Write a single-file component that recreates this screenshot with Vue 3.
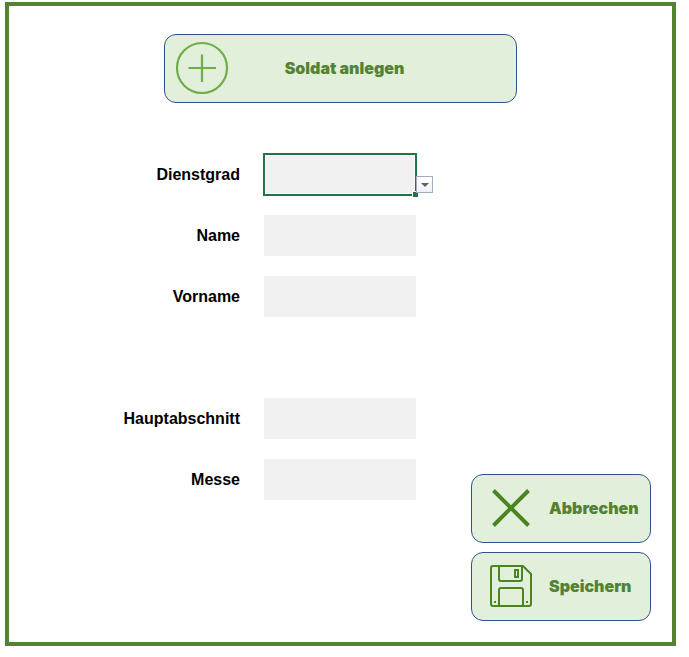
<template>
  <form class="frame" @submit.prevent>
    <button type="button" class="btn btn-create">
      <svg class="icon-plus" viewBox="0 0 54 54" aria-hidden="true">
        <circle cx="27" cy="27" r="25" />
        <path d="M27 13.5V41M13.5 27H41" />
      </svg>
      <span class="create-text">Soldat anlegen</span>
    </button>

    <div class="content">
      <div class="fields">
        <div
          v-for="field in fields"
          :key="field.id"
          class="field-row"
          :class="{ 'new-group': field.newGroup }"
        >
          <label class="field-label" :for="field.id">{{ field.label }}</label>
          <div v-if="field.type === 'select'" class="select-cell">
            <select :id="field.id" v-model="values[field.id]" class="field-control">
              <option value=""></option>
            </select>
            <span class="fill-handle"></span>
            <span class="drop-arrow">
              <svg viewBox="0 0 8 4" aria-hidden="true">
                <path d="M0 0H8L4 4Z" />
              </svg>
            </span>
          </div>
          <input
            v-else
            :id="field.id"
            v-model="values[field.id]"
            type="text"
            class="field-control"
          >
        </div>
      </div>

      <div class="actions">
        <button type="button" class="btn btn-action">
          <svg class="icon-action icon-cancel" viewBox="0 0 42 42" aria-hidden="true">
            <path d="M3.5 3.5L38.5 38.5M38.5 3.5L3.5 38.5" />
          </svg>
          <span>Abbrechen</span>
        </button>
        <button type="submit" class="btn btn-action">
          <svg class="icon-action icon-save" viewBox="0 0 42 42" aria-hidden="true">
            <path d="M3 1H33L41 9V39Q41 41 39 41H3Q1 41 1 39V3Q1 1 3 1Z" />
            <path d="M9 1V14Q9 16 11 16H30Q32 16 32 14V1" />
            <path d="M25 5H28V12H25Z" />
            <path d="M9 41V25Q9 23 11 23H31Q33 23 33 25V41" />
            <path class="dot" d="M4 36H6V38H4ZM36 36H38V38H36Z" />
          </svg>
          <span>Speichern</span>
        </button>
      </div>
    </div>
  </form>
</template>

<script setup>
import { reactive } from 'vue'

const fields = [
  { id: 'dienstgrad', label: 'Dienstgrad', type: 'select' },
  { id: 'name', label: 'Name', type: 'text' },
  { id: 'vorname', label: 'Vorname', type: 'text' },
  { id: 'hauptabschnitt', label: 'Hauptabschnitt', type: 'text', newGroup: true },
  { id: 'messe', label: 'Messe', type: 'text' }
]

const values = reactive({
  dienstgrad: '',
  name: '',
  vorname: '',
  hauptabschnitt: '',
  messe: ''
})
</script>

<style>
body {
  margin: 0;
  background: #ffffff;
}
</style>

<style scoped>
.frame {
  display: flex;
  flex-direction: column;
  box-sizing: border-box;
  min-height: calc(100vh - 13px);
  margin: 2px 13px 11px 5px;
  padding: 28px 21px 21px;
  border: 4px solid #548235;
  font-family: Arial, "Liberation Sans", sans-serif;
}

.btn {
  display: flex;
  align-items: center;
  box-sizing: border-box;
  height: 69px;
  padding: 0 0 1px;
  background: #e2efda;
  border: 1px solid #2f528f;
  border-radius: 12px;
  color: #548235;
  font-family: "Arial Black", Inter, sans-serif;
  font-size: 16px;
  font-weight: 900;
  line-height: 20px;
  cursor: pointer;
}

.btn:hover {
  background: #d5e8c9;
}

.btn-create {
  align-self: center;
  width: 353px;
  max-width: 100%;
  padding-left: 10px;
  padding-right: 10px;
}

.icon-plus {
  flex: none;
  width: 54px;
  height: 54px;
  fill: none;
  stroke: #70ad47;
  stroke-width: 2.2;
}

.create-text {
  flex: 1;
  padding-right: 46px;
  text-align: center;
}

.content {
  display: flex;
  flex: 1;
  justify-content: space-between;
  gap: 20px;
  padding-top: 51px;
}

.fields {
  display: flex;
  flex-direction: column;
  gap: 20px;
}

.field-row {
  display: grid;
  grid-template-columns: 210px 152px;
  align-items: center;
  column-gap: 24px;
}

.new-group {
  margin-top: 61px;
}

.field-label {
  color: #000000;
  font-size: 16px;
  font-weight: bold;
  line-height: 20px;
  text-align: right;
}

.field-control {
  display: block;
  box-sizing: border-box;
  width: 100%;
  height: 41px;
  padding: 0 8px;
  background: #f1f1f1;
  border: none;
  border-radius: 0;
  font-family: inherit;
  font-size: 16px;
  appearance: none;
}

.select-cell {
  position: relative;
}

.select-cell .field-control {
  outline: 2px solid #217346;
  outline-offset: -1px;
  box-shadow: inset 0 0 0 2px #ffffff;
}

.fill-handle {
  position: absolute;
  right: -2px;
  bottom: -2px;
  width: 5px;
  height: 5px;
  background: #217346;
  box-shadow: -1px -1px 0 #ffffff;
}

.drop-arrow {
  position: absolute;
  left: 100%;
  bottom: 2px;
  display: flex;
  align-items: center;
  justify-content: center;
  box-sizing: border-box;
  width: 17px;
  height: 17px;
  background: linear-gradient(#ffffff, #edf1f7);
  border: 1px solid #a6abb8;
  pointer-events: none;
}

.drop-arrow svg {
  width: 8px;
  height: 4px;
  fill: #606060;
}

.actions {
  display: flex;
  flex-direction: column;
  align-self: flex-end;
  gap: 9px;
}

.btn-action {
  gap: 17px;
  width: 180px;
  padding-left: 18px;
}

.icon-action {
  flex: none;
  width: 42px;
  height: 42px;
  fill: none;
  stroke: #4a8522;
}

.icon-cancel {
  stroke-width: 4;
}

.icon-save {
  stroke-width: 2;
}

.icon-save .dot {
  fill: #4a8522;
  stroke: none;
}
</style>
